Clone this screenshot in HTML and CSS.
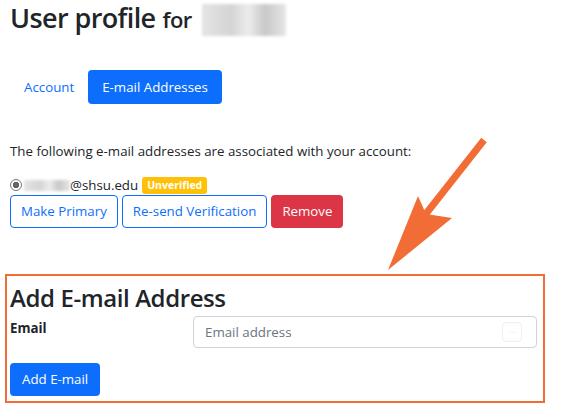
FILE: index.html
```html
<!DOCTYPE html>
<html lang="en">

<head>
  <link rel="stylesheet" href="styles.css">
</head>

<body>
  <div class="page">
    <h2 class="title">User profile <small>for</small> <span class="blur name"></span></h2>

    <ul class="tabs">
      <li><a class="tab" href="#">Account</a></li>
      <li><a class="tab active" href="#">E-mail Addresses</a></li>
    </ul>

    <p class="intro">The following e-mail addresses are associated with your account:</p>

    <div class="address">
      <span class="radio"></span>
      <span class="blur user"></span><span>@shsu.edu</span>
      <span class="badge">Unverified</span>
    </div>

    <div class="actions">
      <button class="btn outline">Make Primary</button>
      <button class="btn outline">Re-send Verification</button>
      <button class="btn danger">Remove</button>
    </div>

    <section class="add-box">
      <h3>Add E-mail Address</h3>
      <div class="field">
        <label for="email">Email</label>
        <div class="input-wrap">
          <input id="email" type="email" placeholder="Email address" />
          <span class="pw-icon">···</span>
        </div>
      </div>
      <button class="btn primary">Add E-mail</button>
    </section>
  </div>

  <svg class="arrow" width="568" height="409" viewBox="0 0 568 409">
    <line x1="484" y1="140" x2="425" y2="215" stroke="#f26d35" stroke-width="7" />
    <polygon points="388,270 418,196 426,214 452,218" fill="#f26d35" />
  </svg>
</body>

</html>
```

FILE: styles.css
```css
:root {
  --blue: #0d6efd;
  --red: #dc3545;
  --yellow: #ffc107;
  --text: #212529;
  --orange: #f26d35;
  --border: #ced4da;
}

* {
  box-sizing: border-box;
}

body {
  margin: 0;
  background: #fff;
  color: var(--text);
  font-family: "Open Sans", "Noto Sans", sans-serif;
  font-size: 13.3px;
  position: relative;
}

.page {
  padding: 0 10px;
}

.title {
  margin: 0;
  height: 40px;
  font-size: 27px;
  font-weight: 600;
  letter-spacing: -0.6px;
  line-height: 36px;
  display: flex;
  align-items: baseline;
  gap: 7px;
}

.title small {
  font-size: 22px;
}

.title .name {
  display: inline-block;
  width: 84px;
  height: 32px;
  align-self: center;
  margin-left: 3px;
}

.blur {
  background: linear-gradient(90deg, #e4e4e4 0%, #d4d4d4 35%, #ececec 55%, #c8c8c8 75%, #e6e6e6 100%);
  filter: blur(1.5px);
}

.tabs {
  list-style: none;
  margin: 30px 0 0;
  padding: 0;
  display: flex;
}

.tab {
  display: block;
  padding: 7px 14px;
  line-height: 20px;
  color: var(--blue);
  text-decoration: none;
  border-radius: 4px;
}

.tab.active {
  background: var(--blue);
  color: #fff;
}

.intro {
  margin: 37px 0 0;
  line-height: 21px;
}

.address {
  margin-top: 14px;
  display: flex;
  align-items: center;
  height: 18px;
}

.radio {
  width: 12px;
  height: 12px;
  border-radius: 50%;
  border: 1.5px solid #777;
  background: radial-gradient(circle, #666 0 3px, #fff 3.5px);
  margin-right: 2px;
}

.user {
  display: inline-block;
  width: 46px;
  height: 11px;
}

.badge {
  margin-left: 4px;
  background: var(--yellow);
  color: #fff;
  font-size: 10.5px;
  font-weight: 700;
  padding: 1px 5px;
  border-radius: 3px;
  line-height: 15px;
}

.actions {
  display: flex;
  gap: 4px;
  margin-top: 1px;
}

.btn {
  font-family: inherit;
  font-size: 13.3px;
  line-height: 21px;
  padding: 5px 10px;
  border-radius: 4px;
  border: 1px solid transparent;
  cursor: pointer;
}

.btn.outline {
  background: #fff;
  color: var(--blue);
  border-color: var(--blue);
}

.btn.danger {
  background: var(--red);
  color: #fff;
}

.btn.primary {
  background: var(--blue);
  color: #fff;
}

.add-box {
  margin: 46px 0 0 -5px;
  border: 2px solid var(--orange);
  padding: 8px 6px 4px 3px;
  width: 540px;
  height: 129px;
}

.add-box h3 {
  margin: 0;
  font-size: 24px;
  font-weight: 600;
  letter-spacing: -0.4px;
  line-height: 28px;
}

.field {
  display: flex;
  align-items: flex-start;
  margin-top: 4px;
}

.field label {
  width: 183px;
  font-weight: 700;
  line-height: 20px;
  padding-top: 2px;
}

.input-wrap {
  position: relative;
  flex: 1;
}

.input-wrap input {
  width: 100%;
  height: 32px;
  border: 1px solid var(--border);
  border-radius: 4px;
  padding: 4px 11px;
  font-family: inherit;
  font-size: 13.3px;
  color: var(--text);
}

.input-wrap input::placeholder {
  color: #6c757d;
}

.pw-icon {
  position: absolute;
  right: 15px;
  top: 6px;
  width: 20px;
  height: 20px;
  border: 1px solid #eee;
  border-radius: 4px;
  color: #ddd;
  font-size: 8px;
  text-align: center;
  line-height: 18px;
}

.add-box .btn.primary {
  margin-top: 15px;
  padding: 5px 11px;
}

.arrow {
  position: absolute;
  left: 0;
  top: 0;
  pointer-events: none;
}
```
